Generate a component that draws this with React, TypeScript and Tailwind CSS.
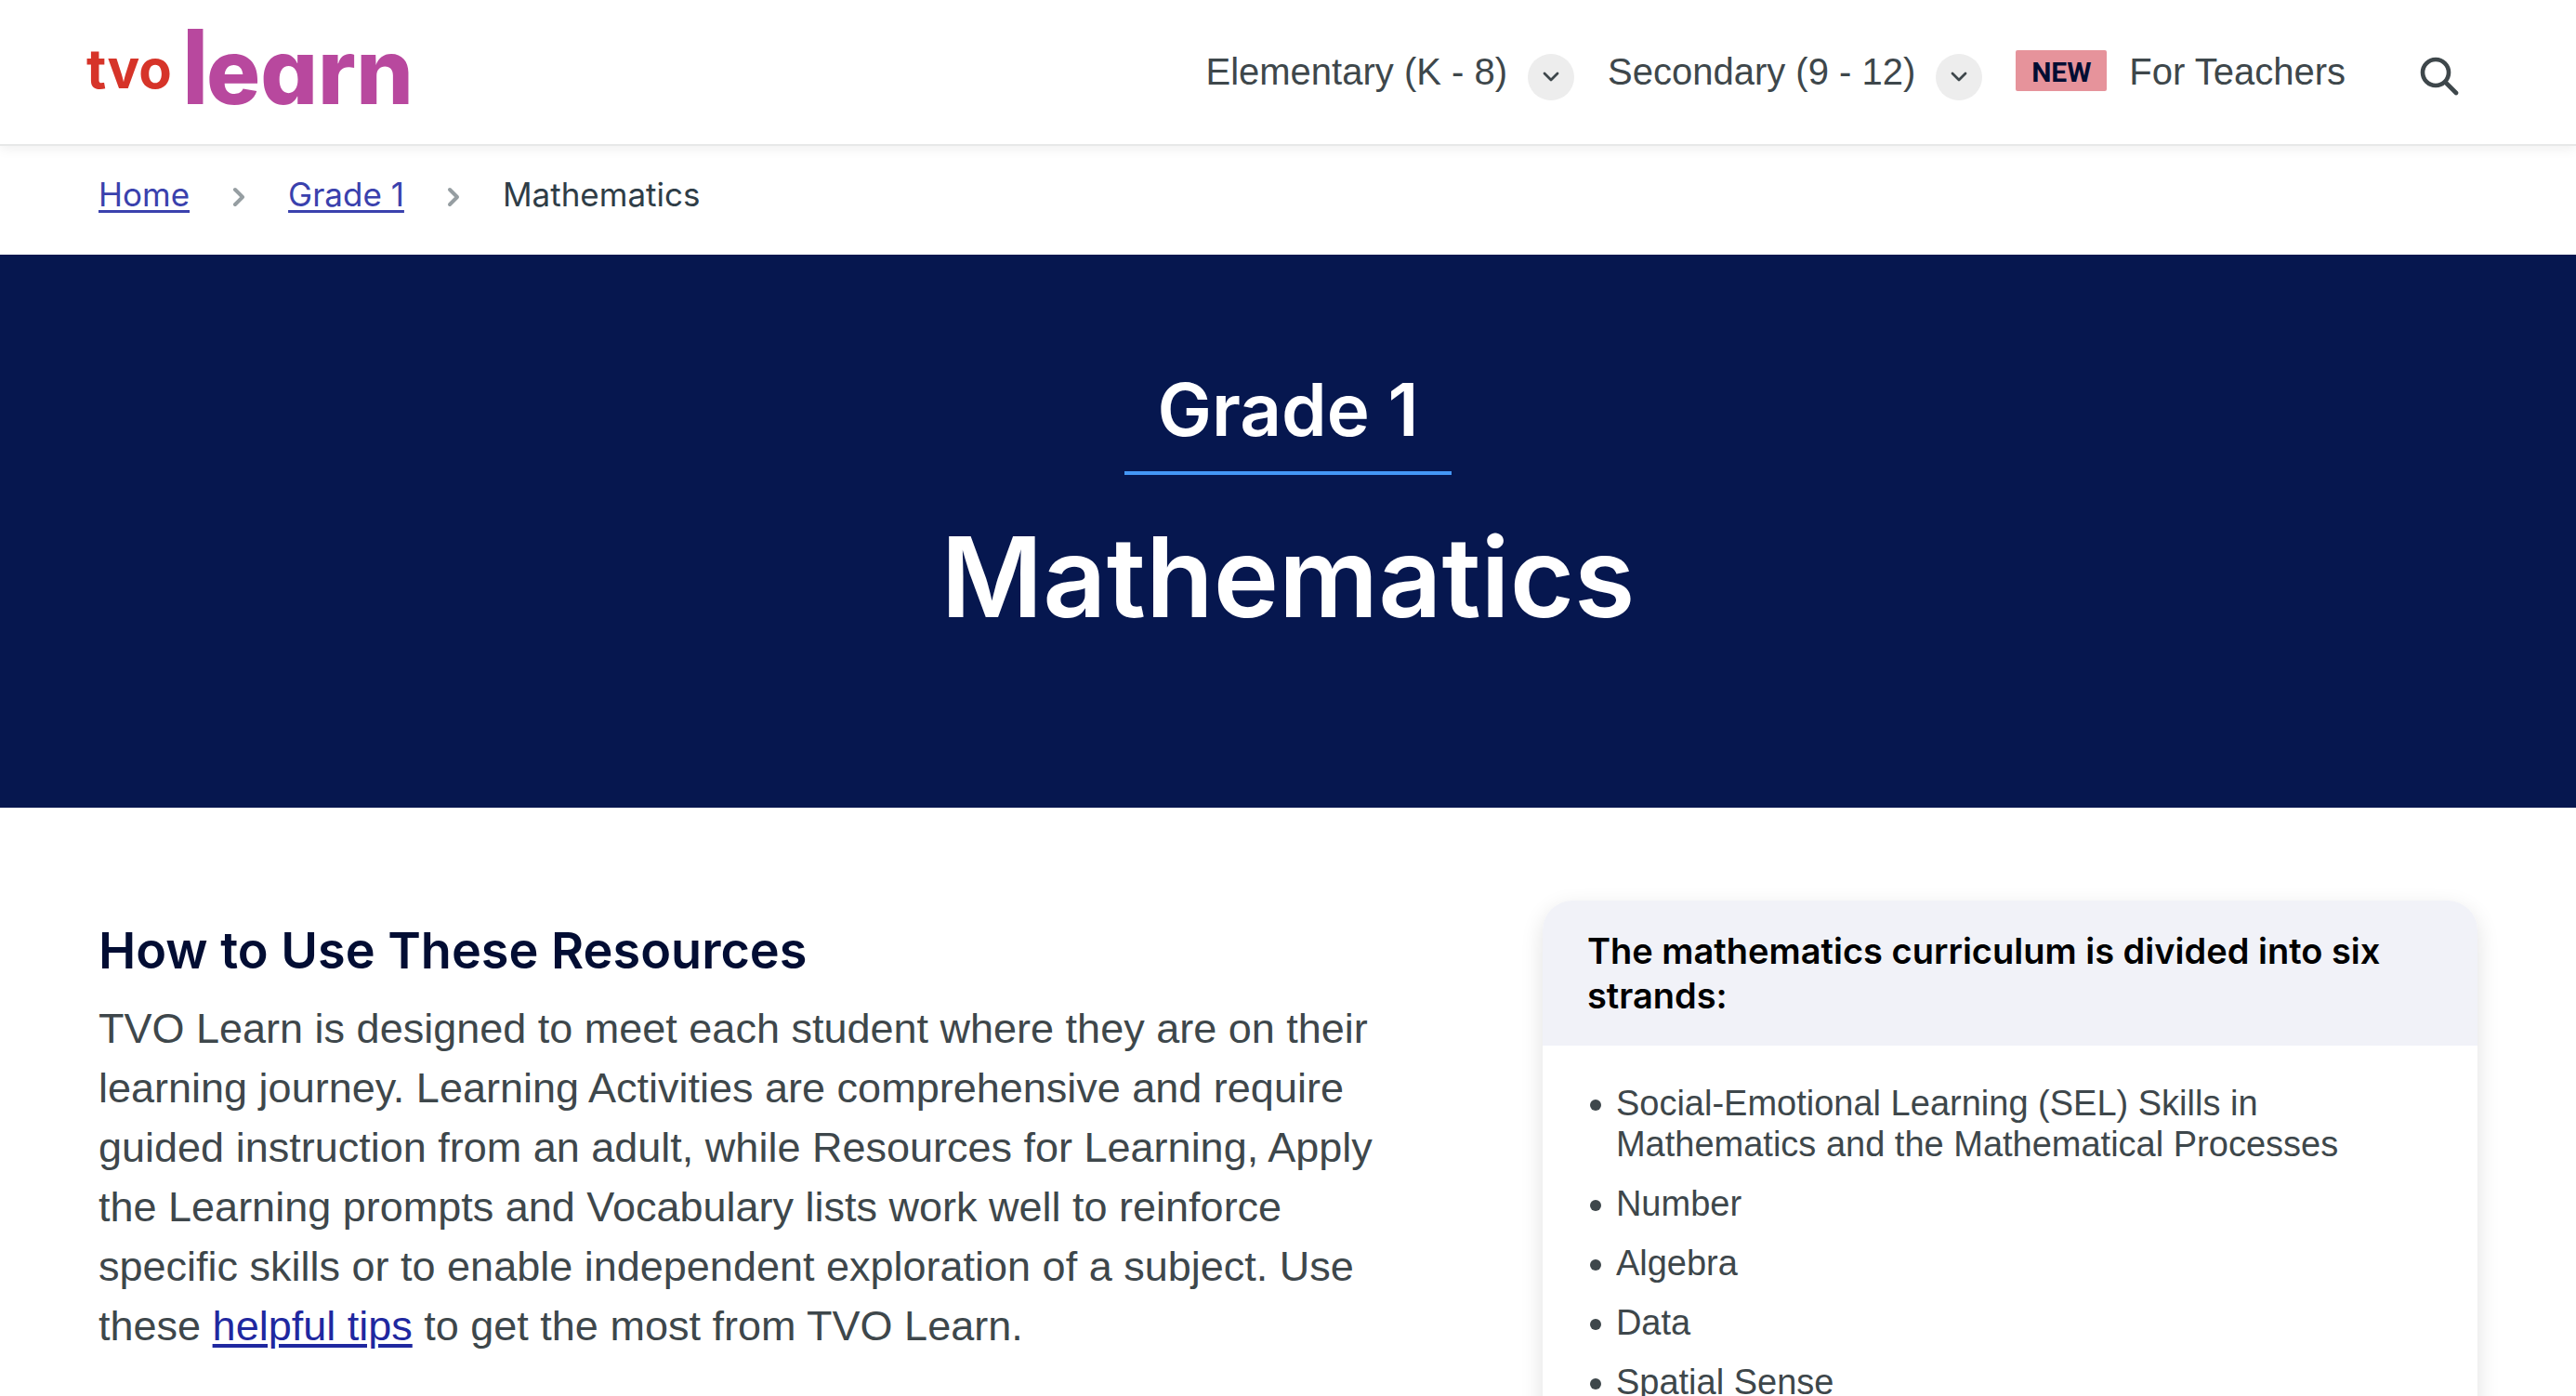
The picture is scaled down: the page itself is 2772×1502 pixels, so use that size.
const strands = [
  "Social-Emotional Learning (SEL) Skills in Mathematics and the Mathematical Processes",
  "Number",
  "Algebra",
  "Data",
  "Spatial Sense",
];

function Logo() {
  return (
    <a href="#" aria-label="TVO Learn" className="shrink-0">
      <svg viewBox="0 0 360 104" className="h-[104px] w-[360px] overflow-visible font-['Inter',sans-serif] [font-feature-settings:'cv11']">
        <text x="8" y="70" fontSize="58" fontWeight="700" fill="#d63429">tvo</text>
        <text x="110" y="87" fontSize="112" fontWeight="700" fill="#b8489e">l</text>
        <text x="137" y="87" fontSize="97" fontWeight="800" fill="#b8489e">earn</text>
      </svg>
    </a>
  );
}

function NavMenu({ label }: { label: string }) {
  return (
    <li className="flex items-center gap-[22px]">
      <a href="#">{label}</a>
      <button
        type="button"
        aria-label={`Open ${label} menu`}
        className="mt-3 flex size-[50px] items-center justify-center rounded-full bg-[#ededed]"
      >
        <svg viewBox="0 0 18 12" className="h-3 w-[18px]" fill="none" stroke="#3e474b" strokeWidth="2.8" strokeLinecap="round" strokeLinejoin="round">
          <path d="M2 2l7 7L16 2" />
        </svg>
      </button>
    </li>
  );
}

function Header() {
  return (
    <header className="flex items-center justify-between border-b-2 border-[#e7e8e8] bg-white pt-[25px] pr-[126px] pb-[26px] pl-[85px] shadow-[0_4px_12px_rgba(0,0,0,0.06)]">
      <Logo />
      <nav aria-label="Main" className="flex items-center gap-20 text-[40px] leading-[48px] whitespace-nowrap text-[#3e474b]">
        <ul className="flex items-center gap-9">
          <NavMenu label="Elementary (K - 8)" />
          <NavMenu label="Secondary (9 - 12)" />
          <li className="flex items-center gap-6">
            <span className="mb-0.5 flex h-11 w-[98px] items-center justify-center rounded-[2px] bg-[#e6939b] pt-1 font-['Roboto',sans-serif] text-[30px] font-bold text-[#020d33]">
              NEW
            </span>
            <a href="#">For Teachers</a>
          </li>
        </ul>
        <button type="button" aria-label="Search" className="mt-2.5">
          <svg viewBox="0 0 42 42" className="size-[42px]" fill="none" stroke="#3e474b" strokeLinecap="round">
            <circle cx="17" cy="17" r="14" strokeWidth="4.6" />
            <path d="M27.5 27.5L39 39" strokeWidth="4.6" />
          </svg>
        </button>
      </nav>
    </header>
  );
}

function Separator() {
  return (
    <svg aria-hidden="true" viewBox="0 0 14 34" className="h-[34px] w-3.5" fill="none" stroke="#969ea2" strokeWidth="4" strokeLinecap="round" strokeLinejoin="round">
      <path d="M3 9l8 8-8 8" />
    </svg>
  );
}

function Breadcrumbs() {
  return (
    <nav aria-label="Breadcrumb" className="px-[106px] pt-8 pb-[45px] font-['Inter',sans-serif] text-[35px] leading-10 text-[#2f3d47]">
      <ol className="flex items-end gap-[46px]">
        <li>
          <a href="#" className="text-[#3a41ad] underline decoration-[3px] underline-offset-4">Home</a>
        </li>
        <li><Separator /></li>
        <li>
          <a href="#" className="text-[#3a41ad] underline decoration-[3px] underline-offset-4">Grade 1</a>
        </li>
        <li><Separator /></li>
        <li aria-current="page">Mathematics</li>
      </ol>
    </nav>
  );
}

function Hero() {
  return (
    <section className="flex flex-col items-center bg-[#06174f] pt-[118px] pb-[178px] font-['Inter',sans-serif] font-semibold text-white">
      <p className="w-[352px] border-b-4 border-[#4497f5] pb-[18px] text-center text-[78px] leading-[97px]">Grade 1</p>
      <h1 className="mt-10 text-[119px] leading-[140px]">Mathematics</h1>
    </section>
  );
}

function StrandsCard() {
  return (
    <aside className="w-[39.3%] rounded-t-[32px] bg-white shadow-[0_8px_24px_rgba(0,0,0,0.12)]">
      <h2 className="rounded-t-[32px] bg-[#f1f2f8] px-12 py-[30px] font-['Inter',sans-serif] text-[38px] leading-[48px] font-semibold text-black">
        The mathematics curriculum is divided into six strands:
      </h2>
      <ul className="flex flex-col gap-5 px-[51px] py-10 text-[38px] leading-[44px]">
        {strands.map((strand) => (
          <li key={strand} className="flex gap-4">
            <span aria-hidden="true" className="mt-[18px] size-3 shrink-0 rounded-full bg-[#3e474b]" />
            <span>{strand}</span>
          </li>
        ))}
      </ul>
    </aside>
  );
}

export default function App() {
  return (
    <div className="bg-white font-['Liberation_Sans',Arial,sans-serif] text-[#3e474b]">
      <Header />
      <Breadcrumbs />
      <Hero />
      <main className="flex items-start justify-between px-[106px] pt-[100px]">
        <section className="w-[55%] pt-[22px]">
          <h2 className="font-['Inter',sans-serif] text-[54px] leading-[64px] font-semibold text-[#020d33]">How to Use These Resources</h2>
          <p className="mt-5 text-[45px] leading-[64px]">
            TVO Learn is designed to meet each student where they are on their learning journey. Learning Activities are
            comprehensive and require guided instruction from an adult, while Resources for Learning, Apply the Learning
            prompts and Vocabulary lists work well to reinforce specific skills or to enable independent exploration of a
            subject. Use these{" "}
            <a href="#" className="text-[#1f28a0] underline decoration-4 underline-offset-4">helpful tips</a> to get the
            most from TVO Learn.
          </p>
        </section>
        <StrandsCard />
      </main>
    </div>
  );
}
